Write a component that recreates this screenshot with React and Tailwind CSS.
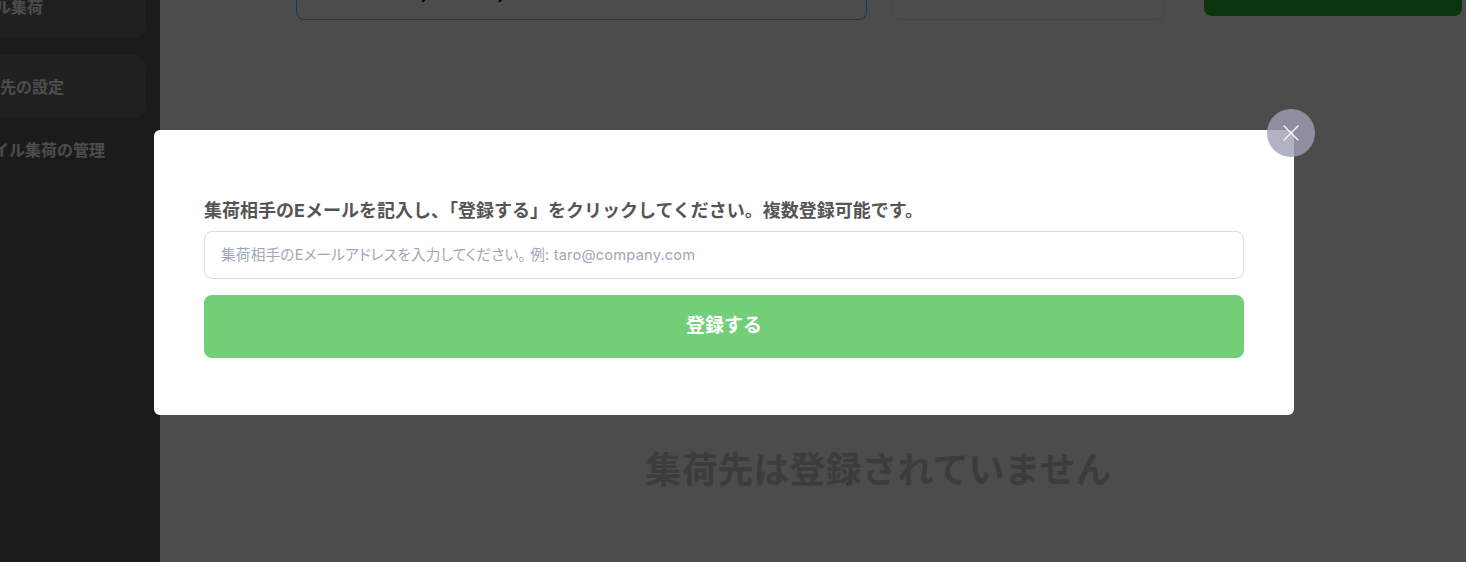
import React from 'react';
import { X } from 'lucide-react';

const fontStack = 'font-[Inter,"Noto_Sans_CJK_JP",sans-serif]';

const Sidebar = () => (
  <aside className="w-[160px] shrink-0 h-full bg-[#5c5c5c] overflow-hidden">
    <div className="-ml-[60px] w-[205px] -mt-[30px] flex flex-col font-bold text-white">
      <div className="h-[68px] pt-[6px] flex items-center pl-[23px] rounded-xl bg-[#6b6b6b]">メール集荷</div>
      <div className="h-[63px] mt-[17px] flex items-center pl-[28px] rounded-xl bg-[#6b6b6b]">集荷先の設定</div>
      <div className="h-[64px] flex items-center pl-[21px]">モバイル集荷の管理</div>
    </div>
  </aside>
);

const Main = () => (
  <main className="flex-1 h-full bg-white overflow-hidden">
    <div className="ml-[110px] h-[51px] flex items-start pl-[25px] rounded-bl-xl border-l border-b border-[#f7f7f7]">
      <div className="w-[571px] h-[20px] border-[1.5px] border-t-0 border-[#6ab8ff] rounded-b-lg overflow-hidden pl-[25px] text-black text-[20px] leading-[20px]">
        <div className="flex -mt-[19px]">
          <span>且</span>
          <span className="ml-[80px]">j</span>
          <span className="ml-[72px]">j</span>
        </div>
      </div>
      <div className="ml-[24px] w-[274px] h-[20px] border border-t-0 border-[#e5e7eb] rounded-b-lg" />
      <div className="ml-[39px] w-[258px] h-[16px] bg-[#26b233] rounded-b-lg" />
    </div>
    <div className="ml-[122px] mt-[49px] h-[500px] rounded-t-xl border border-r-0 border-[#f7f7f7] pl-[8px] flex justify-center">
      <h2 className="pt-[342px] text-[36px] font-bold text-[#c8c8c8] leading-[54px]">集荷先は登録されていません</h2>
    </div>
  </main>
);

const RegisterModal = () => (
  <div className="absolute inset-0 bg-black/70">
    <div className="relative ml-[154px] mt-[130px] w-[1140px] h-[285px] bg-white rounded-md px-[50px] pt-[69px]">
      <p className="text-[18px] leading-[24px] font-bold text-[#555555]">
        集荷相手のEメールを記入し、「登録する」をクリックしてください。複数登録可能です。
      </p>
      <input
        readOnly
        placeholder="集荷相手のEメールアドレスを入力してください。 例: taro@company.com"
        className="mt-[8px] w-full h-[48px] px-4 border border-[#dcdcea] rounded-lg text-[14.7px] tracking-[0.15px] [font-feature-settings:'palt'] placeholder:text-[#a0a8b8] outline-none"
      />
      <button className="mt-4 w-full h-[63px] pb-[1px] bg-[#72cf78] rounded-lg text-white text-[19px] font-bold">
        登録する
      </button>
      <button className="absolute -top-[21px] -right-[21px] w-12 h-12 rounded-full bg-[#9d9fb5]/80 flex items-center justify-center text-white">
        <X size={28} strokeWidth={1} />
      </button>
    </div>
  </div>
);

export default function App() {
  return (
    <div className={`relative w-full h-[562px] flex overflow-hidden ${fontStack}`}>
      <Sidebar />
      <Main />
      <RegisterModal />
    </div>
  );
}
